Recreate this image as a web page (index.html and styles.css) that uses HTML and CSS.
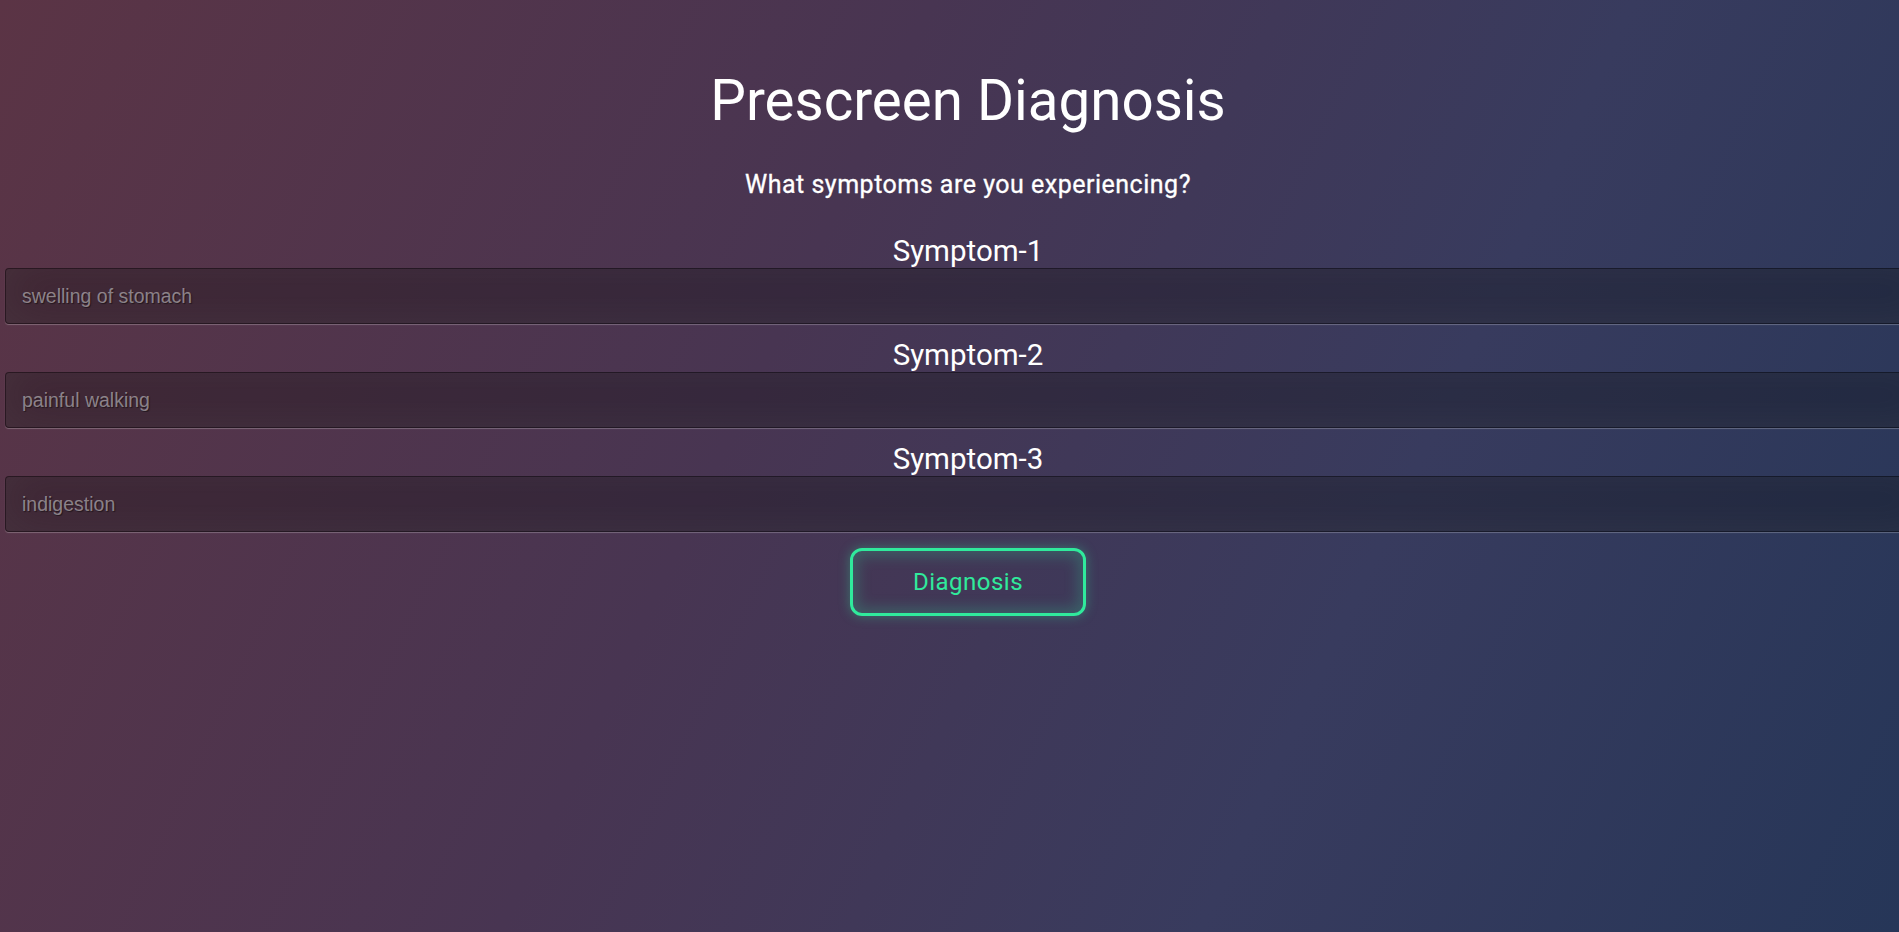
FILE: index.html
```html
<!DOCTYPE html>
<html lang="en">
<head>
<meta charset="utf-8">
<title>Prescreen Diagnosis</title>
<link rel="stylesheet" href="styles.css">
</head>
<body>
<main class="page">
  <h1 class="title">Prescreen Diagnosis</h1>
  <p class="subtitle">What symptoms are you experiencing?</p>
  <form class="form">
    <label class="label" for="s1">Symptom-1</label>
    <input class="field" id="s1" type="text" placeholder="swelling of stomach">
    <label class="label" for="s2">Symptom-2</label>
    <input class="field" id="s2" type="text" placeholder="painful walking">
    <label class="label" for="s3">Symptom-3</label>
    <input class="field" id="s3" type="text" placeholder="indigestion">
    <button class="btn" type="button">Diagnosis</button>
  </form>
</main>
</body>
</html>
```

FILE: styles.css
```css
html, body {
  margin: 0;
  padding: 0;
  height: 100%;
  overflow: hidden;
}

body {
  background: linear-gradient(115deg, #5b3445 0%, #483552 40%, #383b5e 70%, #263658 100%);
  font-family: Roboto, "Liberation Sans", sans-serif;
  color: #fff;
}

.page {
  box-sizing: border-box;
  width: 1926px;
  margin-left: 5px;
  padding-top: 68px;
  display: flex;
  flex-direction: column;
  align-items: center;
}

.title {
  margin: 0;
  font-size: 56.5px;
  font-weight: 400;
  line-height: normal;
}

.subtitle {
  margin: 36px 0 0;
  font-size: 25px;
  font-weight: 400;
  letter-spacing: 0.5px;
  line-height: 30px;
  -webkit-text-stroke: 0.3px #fff;
}

.form {
  width: 100%;
  margin-top: 34px;
  display: flex;
  flex-direction: column;
  align-items: center;
}

.label {
  font-size: 29.5px;
  font-weight: 400;
  line-height: 34px;
}

.field {
  box-sizing: border-box;
  width: 100%;
  height: 56px;
  margin: 0 0 14px;
  padding: 0 16px;
  background: rgba(0, 0, 0, 0.28);
  border: 1px solid rgba(0, 0, 0, 0.35);
  border-radius: 4px;
  outline: none;
  font-family: "Liberation Sans", Arial, sans-serif;
  font-size: 19.5px;
  color: #fff;
  text-shadow: 1px 1px 1px rgba(0, 0, 0, 0.45);
  box-shadow: inset 0 -5px 45px rgba(100, 100, 100, 0.2), 0 1px 1px rgba(255, 255, 255, 0.25);
}

.field::placeholder {
  color: rgba(255, 255, 255, 0.45);
}

.btn {
  box-sizing: border-box;
  width: 236px;
  height: 68px;
  margin-top: 2px;
  background: transparent;
  border: 3px solid #30ea9c;
  border-radius: 12px;
  color: #30ea9c;
  font-family: Roboto, "Liberation Sans", sans-serif;
  font-size: 24px;
  font-weight: 400;
  letter-spacing: 0.5px;
  cursor: pointer;
  box-shadow: 0 0 12px rgba(46, 232, 154, 0.35), inset 0 0 14px 5px rgba(46, 232, 154, 0.22);
}
```
